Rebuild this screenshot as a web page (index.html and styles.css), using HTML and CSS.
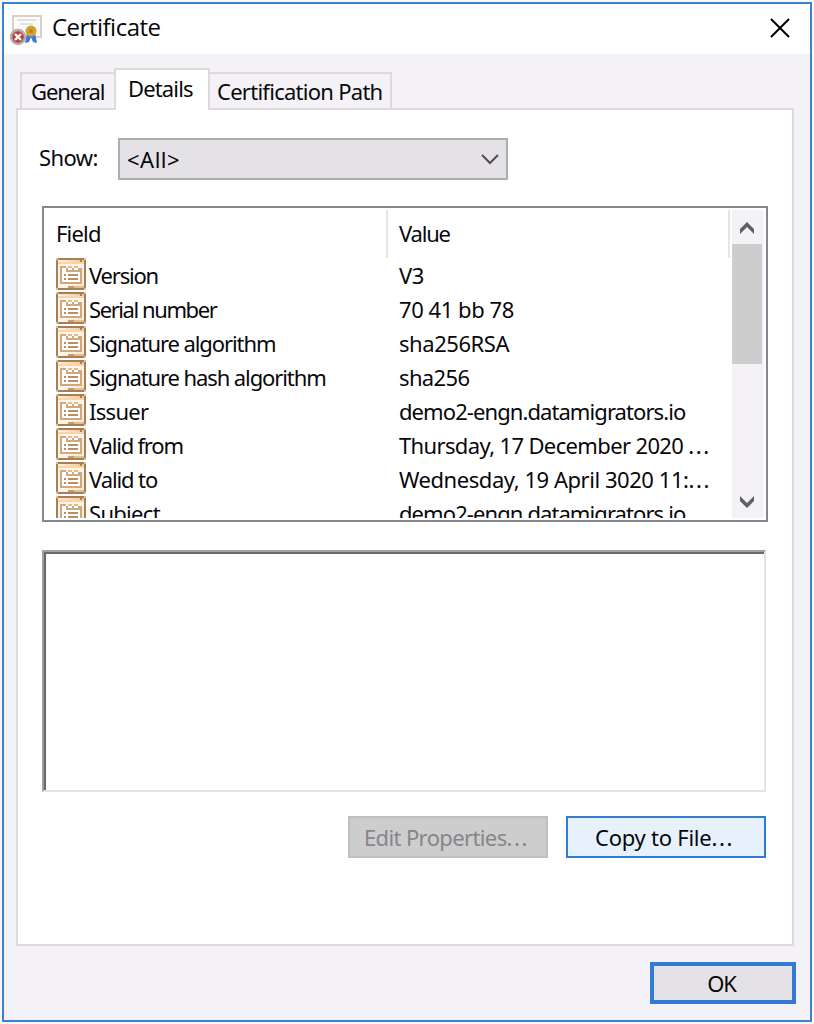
FILE: index.html
```html
<!DOCTYPE html>
<html lang="en">
<head>
<meta charset="utf-8">
<title>Certificate</title>
<link rel="stylesheet" href="styles.css">
</head>
<body>
<svg class="defs" aria-hidden="true">
  <defs>
    <linearGradient id="paper" x1="0" x2="1" y1="0" y2="1"><stop offset="0" stop-color="#fff1e2"/><stop offset=".5" stop-color="#fdf6ee"/><stop offset="1" stop-color="#fbe4cc"/></linearGradient>
    <linearGradient id="bar"><stop offset="0" stop-color="#fff0e0"/><stop offset="1" stop-color="#f9c48e"/></linearGradient>
  </defs>
  <symbol id="field" viewBox="0 0 15 16" shape-rendering="crispEdges">
    <path fill="#d9c3aa" d="M0 0h15v16H0z"/>
    <path fill="#a67f55" d="M1 0h13v1H1zM0 1h1v14H0zM14 1h1v14h-1zM1 15h13v1H1z"/>
    <path fill="url(#paper)" d="M1 1h13v14H1z"/>
    <path fill="url(#bar)" d="M1 1h13v1H1z"/>
    <path fill="#fbd3a9" d="M1 2h13v1H1z"/>
    <path fill="#a67f55" d="M12 1h1v1h-1z"/>
    <path fill="#fff" d="M3 5h9v7H3z"/>
    <path fill="#cfa97d" d="M2 4h3v1H2zM2 4h1v9H2zM2 12h11v1H2zM12 5h1v8h-1zM5 5h1v1H5zM5 6h8v1H5zM8 5h1v1H8zM11 5h1v1h-1z"/>
    <path fill="#dfbd94" d="M6 4h2v1H6zM9 4h2v1H9z"/>
    <path fill="#b98f62" d="M4 8h1v1H4zM4 10h1v1H4zM6 8h5v1H6zM6 10h5v1H6z"/>
    <path fill="#c79c6b" d="M6 14h3v1H6z"/>
    <path fill="#e5bd8f" d="M9 14h5v1H9z"/>
  </symbol>
</svg>
<main class="window">
  <header class="titlebar">
    <svg class="cert-icon" viewBox="0 0 34 34">
      <path fill="#fbfbfb" stroke="#d8d0c4" stroke-width="2" d="M4 3h28v21H4z"/>
      <path stroke="#dfe3ea" stroke-width="2" d="M8 7h19M11 11h13"/>
      <path fill="#3e78d2" d="m18 20-2 10 4-1 2-5 2 5 4 1-2-10z"/>
      <circle cx="22" cy="18" r="5.5" fill="#d6a02c"/><circle cx="22" cy="18" r="2" fill="#b98122"/>
      <circle cx="9" cy="24" r="7" fill="#bf3f3c" stroke="#b3afaf" stroke-width="2.4"/>
      <path stroke="#fff" stroke-width="2.4" d="m6 21 6 6m0-6-6 6"/>
    </svg>
    <h1 class="title">Certificate</h1>
    <svg class="close" viewBox="0 0 20 20"><path d="m1 1 18 18M19 1 1 19"/></svg>
  </header>
  <nav class="tabs">
    <span class="tab tab-general">General</span>
    <span class="tab tab-active">Details</span>
    <span class="tab tab-path">Certification Path</span>
  </nav>
  <section class="panel">
    <div class="show-row">
      <span class="show-label">Show:</span>
      <div class="combo"><span class="selected">&lt;All&gt;</span>
        <svg class="combo-arrow" viewBox="0 0 18 12"><path d="m1 2 8 8 8-8"/></svg></div>
    </div>
    <div class="list">
      <div class="table">
        <div class="head"><span class="head-field">Field</span><span class="head-value">Value</span></div>
        <div class="row"><svg class="icon"><use href="#field"/></svg><span class="name tight">Version</span><span class="value short">V3</span></div>
        <div class="row"><svg class="icon"><use href="#field"/></svg><span class="name tighter">Serial number</span><span class="value short">70 41 bb 78</span></div>
        <div class="row"><svg class="icon"><use href="#field"/></svg><span class="name">Signature algorithm</span><span class="value short">sha256RSA</span></div>
        <div class="row"><svg class="icon"><use href="#field"/></svg><span class="name">Signature hash algorithm</span><span class="value date">sha256</span></div>
        <div class="row"><svg class="icon"><use href="#field"/></svg><span class="name loose">Issuer</span><span class="value">demo2-engn.datamigrators.io</span></div>
        <div class="row"><svg class="icon"><use href="#field"/></svg><span class="name tight">Valid from</span><span class="value date">Thursday, 17 December 2020 <span class="dots">...</span></span></div>
        <div class="row"><svg class="icon"><use href="#field"/></svg><span class="name">Valid to</span><span class="value short">Wednesday, 19 April 3020 11:<span class="dots">...</span></span></div>
        <div class="row"><svg class="icon"><use href="#field"/></svg><span class="name loose">Subject</span><span class="value">demo2-engn.datamigrators.io</span></div>
      </div>
      <div class="scrollbar">
        <svg class="scroll-arrow" viewBox="0 0 14 12"><path d="M0 12V7l7-7 7 7v5L7 5z"/></svg>
        <div class="thumb"></div>
        <svg class="scroll-arrow scroll-down" viewBox="0 0 14 12"><path d="M0 0v5l7 7 7-7V0L7 7z"/></svg>
      </div>
    </div>
    <div class="detail"><div class="detail-inner"></div></div>
    <div class="actions">
      <button class="button disabled">Edit Properties<span class="dots">...</span></button>
      <button class="button hot">Copy to File<span class="dots">...</span></button>
    </div>
  </section>
  <footer class="footer"><button class="button ok">OK</button></footer>
</main>
</body>
</html>
```
FILE: styles.css
```css
* { box-sizing: border-box; }
body { margin: 0; padding: 2px; width: 814px; height: 1024px; overflow: hidden; background: #f9f9f9; color: #08080c; font: 22px/34px "Noto Sans", sans-serif; letter-spacing: -0.4px; white-space: nowrap; }
.defs { position: absolute; width: 0; height: 0; }
.window { width: 810px; height: 1020px; border: 2px solid #3b82d1; background: #f4f2f6; }
.titlebar { display: flex; align-items: center; height: 50px; padding: 0 20px 0 5px; background: #fff; }
.cert-icon { width: 34px; height: 34px; margin-top: 2px; }
.title { flex: 1; margin: -4px 0 0 9px; font: 24px/34px "Open Sans", sans-serif; letter-spacing: -0.5px; }
.close { width: 20px; height: 20px; fill: none; stroke: #000; stroke-width: 2; margin-top: -2px; }
.tabs { display: flex; align-items: flex-end; height: 56px; margin: 0 0 -2px 16px; padding-top: 14px; }
.tab { height: 38px; border: 2px solid #dcdadd; line-height: 35px; }
.tab-general { width: 94px; padding-left: 9px; border-right: 0; letter-spacing: -1.1px; }
.tab-active { width: 96px; height: 42px; padding-left: 12px; border-bottom: 0; line-height: 36px; background: #fff; z-index: 1; letter-spacing: -0.85px; }
.tab-path { width: 182px; padding-left: 7px; border-left: 0; letter-spacing: -0.73px; }
.panel { width: 778px; height: 838px; margin-left: 12px; border: 2px solid #dcdadd; background: #fff; padding: 28px 24px 0; }
.show-row { display: flex; height: 42px; margin-left: -3px; }
.show-label { width: 79px; line-height: 38px; letter-spacing: -0.6px; }
.combo { display: flex; align-items: center; justify-content: space-between; width: 390px; padding: 0 7px; border: 2px solid #adadad; background: #e4e2e6; }
.selected { letter-spacing: 0.5px; }
.combo-arrow { width: 18px; height: 12px; fill: none; stroke: #505050; stroke-width: 2; }
.list { display: flex; width: 726px; height: 316px; margin-top: 26px; padding: 2px; border: 2px solid #828790; }
.table { width: 686px; height: 308px; overflow: hidden; }
.head { display: flex; height: 48px; line-height: 46px; }
.head-field { width: 342px; padding-left: 10px; border-right: 2px solid #e5e5e5; letter-spacing: -0.8px; }
.head-value { width: 342px; padding-left: 11px; border-right: 2px solid #e5e5e5; letter-spacing: -1.2px; }
.row { display: flex; height: 34px; padding-left: 10px; line-height: 34px; }
.icon { width: 30px; height: 32px; }
.name { width: 310px; padding-left: 3px; letter-spacing: -1.1px; }
.tight { letter-spacing: -1.2px; }
.tighter { letter-spacing: -1.42px; }
.loose { letter-spacing: -0.7px; }
.value { padding-left: 3px; letter-spacing: -0.92px; }
.short { letter-spacing: -0.45px; }
.date { letter-spacing: -0.64px; }
.dots { letter-spacing: 1.6px; }
.scrollbar { display: flex; flex-direction: column; width: 32px; height: 308px; background: #f4f2f6; }
.scroll-arrow { width: 14px; height: 12px; margin: 12px 8px 10px; fill: #606060; }
.thumb { width: 30px; height: 120px; background: #cdcdcd; }
.scroll-down { margin-top: 132px; }
.detail { width: 724px; height: 242px; margin-top: 28px; border: 2px solid; border-color: #a0a0a0 #e3e3e3 #e3e3e3 #a0a0a0; }
.detail-inner { height: 100%; border-top: 2px solid #696969; border-left: 2px solid #696969; }
.actions { display: flex; justify-content: flex-end; gap: 18px; width: 724px; margin-top: 24px; }
.button { width: 200px; height: 42px; padding: 0 3px 0 0; border: 2px solid #bfbfbf; color: inherit; font: inherit; letter-spacing: inherit; line-height: 38px; }
.disabled { background: #cdcdcd; color: #87858b; letter-spacing: -0.62px; }
.hot { background: #e6f1fc; border-color: #327bd1; letter-spacing: -0.25px; }
.footer { display: flex; justify-content: flex-end; padding: 16px 14px 0 0; }
.ok { width: 146px; border: 4px solid #327bd1; background: #e4e2e6; line-height: 34px; letter-spacing: -1.2px; }
```
